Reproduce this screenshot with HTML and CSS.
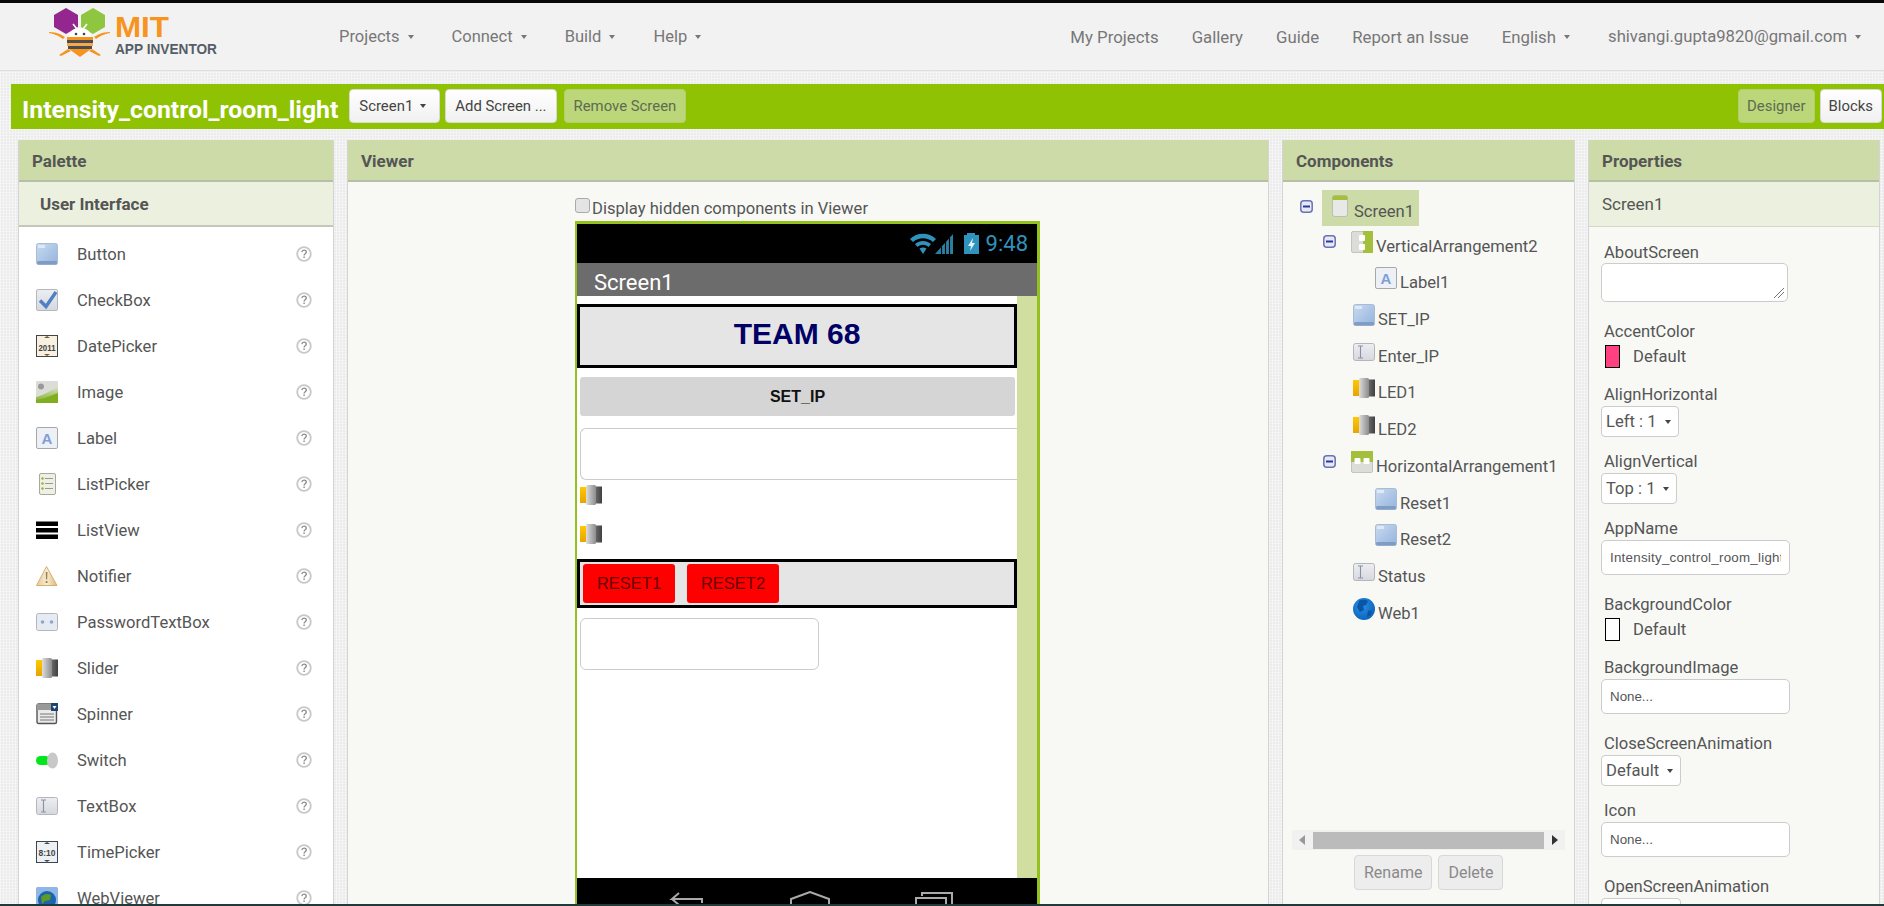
FILE: index.html
```html
<!DOCTYPE html>
<html lang="en">
<head>
<meta charset="utf-8">
<title>MIT App Inventor</title>
<link rel="stylesheet" href="styles.css">
</head>
<body>
<svg class="defs" aria-hidden="true">
  <defs>
    <linearGradient id="g-btn" x1="0" y1="0" x2="1" y2="1"><stop offset="0" stop-color="#c9daf0"/><stop offset="1" stop-color="#94b3dc"/></linearGradient>
    <linearGradient id="g-box" x1="0" y1="0" x2="0" y2="1"><stop offset="0" stop-color="#eceef2"/><stop offset="1" stop-color="#d6d8de"/></linearGradient>
    <linearGradient id="g-hill" x1="0" y1="0" x2="0" y2="1"><stop offset="0" stop-color="#d8e2c8"/><stop offset="1" stop-color="#7cab1c"/></linearGradient>
    <linearGradient id="g-warn" x1="0" y1="0" x2="1" y2="0"><stop offset="0" stop-color="#e9c98c"/><stop offset=".5" stop-color="#f6ecd6"/><stop offset="1" stop-color="#dfb871"/></linearGradient>
    <linearGradient id="g-sld-y" x1="0" y1="0" x2="0" y2="1"><stop offset="0" stop-color="#ffc800"/><stop offset="1" stop-color="#e8a400"/></linearGradient>
    <linearGradient id="g-sld-t" x1="0" y1="0" x2="1" y2="0"><stop offset="0" stop-color="#dedede"/><stop offset=".5" stop-color="#b4b4b4"/><stop offset="1" stop-color="#8c8c8c"/></linearGradient>
    <linearGradient id="g-sld-d" x1="0" y1="0" x2="1" y2="0"><stop offset="0" stop-color="#7a7a7a"/><stop offset="1" stop-color="#404040"/></linearGradient>
    <radialGradient id="g-web" cx=".4" cy=".35" r=".7"><stop offset="0" stop-color="#2a90e8"/><stop offset="1" stop-color="#0a62b8"/></radialGradient>

    <symbol id="i-button" viewBox="0 0 22 22"><rect x=".5" y=".5" width="21" height="21" rx="2" fill="url(#g-btn)" stroke="#a9bcd6"/><rect x="1" y="18" width="20" height="3.5" rx="1.5" fill="#7f9cc4"/><rect x="2" y="2" width="7" height="3" fill="#dfe9f6"/></symbol>
    <symbol id="i-check" viewBox="0 0 22 22"><rect x=".5" y=".5" width="21" height="21" rx="1.5" fill="url(#g-box)" stroke="#b5b8be"/><path d="M4 11.5l6 6L20 3" fill="none" stroke="#4f80c4" stroke-width="3.4"/></symbol>
    <symbol id="i-date" viewBox="0 0 22 22"><rect x=".5" y=".5" width="21" height="21" fill="#f8f0e0" stroke="#444"/><path d="M8 3h6l-3-2zM8 19h6l-3 2z" fill="#6a5a3a"/><text x="2.500" y="15.500" class="ic-date" textLength="17" lengthAdjust="spacingAndGlyphs">2011</text></symbol>
    <symbol id="i-image" viewBox="0 0 22 22"><rect width="22" height="22" rx="1" fill="#dcdcd8"/><path d="M0 16c6-1 13-6 22-10v16H0z" fill="url(#g-hill)"/><path d="M0 19c8-1 14-4 22-7v10H0z" fill="#7faf1e"/><circle cx="5" cy="5.500" r="3" fill="#999"/></symbol>
    <symbol id="i-label" viewBox="0 0 22 22"><rect x=".5" y=".5" width="21" height="21" rx="1.500" fill="#edf0f5" stroke="#a8a8ac"/><text x="11" y="16.500" class="ic-a">A</text></symbol>
    <symbol id="i-list" viewBox="0 0 22 22"><rect x="3.500" y=".5" width="16" height="21" rx="1.500" fill="#eef0e4" stroke="#a8a8a0"/><g fill="#8fb13a"><circle cx="6.500" cy="5.500" r="1.200"/><circle cx="6.500" cy="10.500" r="1.200"/><circle cx="6.500" cy="15.500" r="1.200"/></g><path d="M9 5.500h8M9 10.500h8M9 15.500h8" stroke="#9a9a94" stroke-width="1.200"/></symbol>
    <symbol id="i-listview" viewBox="0 0 22 22"><path d="M0 2.500h22v4.500H0zM0 9h22v4.500H0zM0 15.500h22V20H0z" fill="#000"/></symbol>
    <symbol id="i-notifier" viewBox="0 0 22 22"><path d="M10.500 1.500L21 20.500H.5z" fill="url(#g-warn)" stroke="#d6b070"/><path d="M9.700 7h1.800l-.3 7.500h-1.200zM9.700 16h1.800v2h-1.800z" fill="#9a8355"/></symbol>
    <symbol id="i-password" viewBox="0 0 22 22"><rect x=".5" y="2.500" width="21" height="17" rx="2" fill="#e6eaf2" stroke="#b4b6bc"/><circle cx="6.500" cy="11" r="1.800" fill="#8fa6c8"/><circle cx="15.500" cy="11" r="1.800" fill="#8fa6c8"/></symbol>
    <symbol id="i-slider" viewBox="0 0 22 22"><rect y="3" width="8" height="16" fill="url(#g-sld-y)"/><rect x="13" y="2.500" width="9" height="17" fill="url(#g-sld-d)"/><rect x="6" y="1" width="10" height="20" rx="1.500" fill="url(#g-sld-t)"/></symbol>
    <symbol id="i-spinner" viewBox="0 0 22 22"><rect x="1" y="1" width="19.500" height="19.500" rx="1.500" fill="#e9e9e9" stroke="#555" stroke-width="1.400"/><rect x="1" y="1" width="14" height="6" fill="#999"/><rect x="15" y="0" width="7" height="8" fill="#1f4470"/><path d="M16.500 3h4l-2 3z" fill="#fff"/><path d="M4 11h14M4 14h14M4 17h14" stroke="#777"/></symbol>
    <symbol id="i-switch" viewBox="0 0 22 22"><rect y="7" width="14" height="9" rx="4.500" fill="#00e81c"/><ellipse cx="16.500" cy="11.500" rx="5.500" ry="8" fill="#c8c8c8"/></symbol>
    <symbol id="i-textbox" viewBox="0 0 22 22"><rect x=".5" y="2.500" width="21" height="17" rx="2" fill="url(#g-box)" stroke="#b4b6bc"/><path d="M5 5h5M5 17h5M7.500 5v12" stroke="#8a8fa8" stroke-width="1.100" fill="none"/></symbol>
    <symbol id="i-time" viewBox="0 0 22 22"><rect x=".5" y=".5" width="21" height="21" fill="#eef1f4" stroke="#3a4654"/><path d="M8 3h6l-3-2zM8 19h6l-3 2z" fill="#3a4654"/><text x="2.500" y="15" class="ic-date" textLength="17" lengthAdjust="spacingAndGlyphs">8:10</text></symbol>
    <symbol id="i-web" viewBox="0 0 22 22"><circle cx="11" cy="11" r="11" fill="url(#g-web)"/><path d="M6 3c3-2 7-1 9 0l-2 4-3 1 1 4-4 2-3-5zM15 13l4-1-1 5-4 2z" fill="#0a55a5"/></symbol>
    <symbol id="i-webp" viewBox="0 0 22 22"><rect width="22" height="22" rx="1.500" fill="#8fb6e4"/><circle cx="11" cy="13" r="9" fill="#1c64b0"/><path d="M5 10c3-3 7-4 10-2l-1 5-5 1-3 3z" fill="#5f9a22"/></symbol>
    <symbol id="i-screen" viewBox="0 0 16 22"><rect x=".5" y=".5" width="15" height="21" rx="2" fill="#e8e8e6" stroke="#bdbdb5"/><path d="M.5 5V2.500a2 2 0 0 1 2-2h11a2 2 0 0 1 2 2V5z" fill="#a3bf3c"/></symbol>
    <symbol id="i-varr" viewBox="0 0 22 22"><rect x=".5" y=".5" width="21" height="21" rx="1.500" fill="#dcdcd8" stroke="#c4c4be"/><rect x="12" y="0" width="10" height="22" fill="#a3bf3c"/><rect x="8" y="4" width="6" height="6" rx="1" fill="#fff"/><rect x="8" y="13" width="6" height="6" rx="1" fill="#fff"/></symbol>
    <symbol id="i-harr" viewBox="0 0 22 22"><rect x=".5" y=".5" width="21" height="21" rx="1.500" fill="#dcdcd8" stroke="#c4c4be"/><rect width="22" height="11" fill="#a3bf3c"/><rect x="3.500" y="7" width="6" height="6" rx="1" fill="#fff"/><rect x="12.500" y="7" width="6" height="6" rx="1" fill="#fff"/></symbol>
    <symbol id="i-minus" viewBox="0 0 13 13"><rect x=".8" y=".8" width="11.400" height="11.400" rx="3" fill="#e6e8f4" stroke="#6a72b4" stroke-width="1.500"/><rect x="3" y="5.500" width="7" height="2" fill="#2a3a9a"/></symbol>
    <symbol id="i-help" viewBox="0 0 16 16"><circle cx="8" cy="8" r="6.800" fill="#fff" stroke="#c8c8c8" stroke-width="1.800"/><path d="M5.800 6.200c.2-1.400 1.200-2 2.300-2 1.300 0 2.200.8 2.200 1.900 0 1.800-2.200 1.600-2.200 3.400" fill="none" stroke="#8a8a8a" stroke-width="1.300"/><rect x="7.400" y="10.500" width="1.400" height="1.500" fill="#8a8a8a"/></symbol>
  </defs>
</svg>

<div class="app">
  <header class="nav">
    <a class="logo">
      <svg class="logo-svg" viewBox="0 0 180 56" width="180" height="56">
        <path d="M9 10L21 3l12 7v12l-12 7-12-7z" fill="#93268f"/>
        <path d="M36 10l12-7 12 7v12l-12 7-12-7z" fill="#8fc640"/>
        <path d="M4 27c8 0 13 3 16 5l-2 2c-4-3-8-5-14-6zM65 27c-8 0-13 3-16 5l2 2c4-3 8-5 14-6z" fill="#f7941e"/>
        <path d="M28 19l4 5M42 19l-4 5" stroke="#fff" stroke-width="1.600"/>
        <path d="M24 32c0-6 5-9 11-9s11 3 11 9z" fill="#fff"/>
        <circle cx="31" cy="29" r="1.300" fill="#444"/><circle cx="39" cy="29" r="1.300" fill="#444"/>
        <path d="M22 32h26v3H22z" fill="#f7941e"/>
        <path d="M22 35h26v3H22z" fill="#4d4d4d"/>
        <path d="M22 38h26v3H22z" fill="#f7a84a"/>
        <path d="M23 41h24v3H23z" fill="#4d4d4d"/>
        <path d="M24 44h22l-11 8z" fill="#f7941e"/>
        <path d="M23 44l-9 6 2 1 10-5zM47 44l9 6-2 1-10-5z" fill="#f7941e"/>
        <text x="70" y="32" class="logo-mit" textLength="54" lengthAdjust="spacingAndGlyphs">MIT</text>
        <text x="70" y="49" class="logo-app" textLength="102" lengthAdjust="spacingAndGlyphs">APP INVENTOR</text>
      </svg>
    </a>
    <nav class="nav-left">
      <span class="nav-item">Projects<i class="caret"></i></span>
      <span class="nav-item">Connect<i class="caret"></i></span>
      <span class="nav-item">Build<i class="caret"></i></span>
      <span class="nav-item">Help<i class="caret"></i></span>
    </nav>
    <nav class="nav-right">
      <span class="nav-link">My Projects</span>
      <span class="nav-link">Gallery</span>
      <span class="nav-link">Guide</span>
      <span class="nav-link">Report an Issue</span>
      <span class="nav-item">English<i class="caret"></i></span>
      <span class="nav-item nav-email">shivangi.gupta9820@gmail.com<i class="caret"></i></span>
    </nav>
  </header>

  <section class="bar">
    <h1 class="bar-title">Intensity_control_room_light</h1>
    <button class="bar-btn bar-btn-menu">Screen1<i class="caret caret-dark"></i></button>
    <button class="bar-btn">Add Screen ...</button>
    <button class="bar-btn bar-btn-off bar-btn-far">Remove Screen</button>
    <span class="bar-spacer"></span>
    <button class="bar-btn bar-btn-off bar-btn-compact">Designer</button>
    <button class="bar-btn bar-btn-compact">Blocks</button>
  </section>

  <main class="panels">
    <section class="panel palette">
      <h2 class="panel-head">Palette</h2>
      <h3 class="panel-sub panel-sub-bold">User Interface</h3>
      <ul class="pal-list">
        <li class="pal-row"><svg class="ic"><use href="#i-button"/></svg><span class="pal-name">Button</span><svg class="help"><use href="#i-help"/></svg></li>
        <li class="pal-row"><svg class="ic"><use href="#i-check"/></svg><span class="pal-name">CheckBox</span><svg class="help"><use href="#i-help"/></svg></li>
        <li class="pal-row"><svg class="ic"><use href="#i-date"/></svg><span class="pal-name">DatePicker</span><svg class="help"><use href="#i-help"/></svg></li>
        <li class="pal-row"><svg class="ic"><use href="#i-image"/></svg><span class="pal-name">Image</span><svg class="help"><use href="#i-help"/></svg></li>
        <li class="pal-row"><svg class="ic"><use href="#i-label"/></svg><span class="pal-name">Label</span><svg class="help"><use href="#i-help"/></svg></li>
        <li class="pal-row"><svg class="ic"><use href="#i-list"/></svg><span class="pal-name">ListPicker</span><svg class="help"><use href="#i-help"/></svg></li>
        <li class="pal-row"><svg class="ic"><use href="#i-listview"/></svg><span class="pal-name">ListView</span><svg class="help"><use href="#i-help"/></svg></li>
        <li class="pal-row"><svg class="ic"><use href="#i-notifier"/></svg><span class="pal-name">Notifier</span><svg class="help"><use href="#i-help"/></svg></li>
        <li class="pal-row"><svg class="ic"><use href="#i-password"/></svg><span class="pal-name">PasswordTextBox</span><svg class="help"><use href="#i-help"/></svg></li>
        <li class="pal-row"><svg class="ic"><use href="#i-slider"/></svg><span class="pal-name">Slider</span><svg class="help"><use href="#i-help"/></svg></li>
        <li class="pal-row"><svg class="ic"><use href="#i-spinner"/></svg><span class="pal-name">Spinner</span><svg class="help"><use href="#i-help"/></svg></li>
        <li class="pal-row"><svg class="ic"><use href="#i-switch"/></svg><span class="pal-name">Switch</span><svg class="help"><use href="#i-help"/></svg></li>
        <li class="pal-row"><svg class="ic"><use href="#i-textbox"/></svg><span class="pal-name">TextBox</span><svg class="help"><use href="#i-help"/></svg></li>
        <li class="pal-row"><svg class="ic"><use href="#i-time"/></svg><span class="pal-name">TimePicker</span><svg class="help"><use href="#i-help"/></svg></li>
        <li class="pal-row"><svg class="ic"><use href="#i-webp"/></svg><span class="pal-name">WebViewer</span><svg class="help"><use href="#i-help"/></svg></li>
      </ul>
    </section>

    <section class="panel viewer">
      <h2 class="panel-head">Viewer</h2>
      <div class="viewer-body">
        <label class="hidden-toggle"><i class="fake-check"></i>Display hidden components in Viewer</label>
        <div class="phone">
          <div class="phone-status">
            <svg class="status-icons" viewBox="0 0 72 24" width="72" height="24">
              <path d="M2 7C9 0 21 0 28 7l-3 3C19 5 11 5 5 10zM7 12c5-4 11-4 16 0l-2.500 3c-3.500-3-7.500-3-11 0zM11.500 16.500c2.500-1.500 4.500-1.500 7 0L15 22z" fill="#2f93bd"/>
              <path d="M27 22L45 2v20z" fill="#2a7fa3"/><path d="M33.500 22v-7M37.500 22V10M41.500 22V6" stroke="#000" stroke-width="1.100"/>
              <path d="M59 3V1h8v2h4v19H56V3z" fill="#2f93bd"/><path d="M65 6l-5 8h3l-1 5 5-8h-3z" fill="#dff4ff"/>
            </svg>
            <span class="status-time">9:48</span>
          </div>
          <div class="phone-title">Screen1</div>
          <div class="phone-main">
            <div class="phone-content">
              <div class="arr-label"><span class="team">TEAM 68</span></div>
              <button class="set-ip">SET_IP</button>
              <div class="tbox tbox-full"></div>
              <svg class="ic ic-led-first"><use href="#i-slider"/></svg>
              <svg class="ic ic-led-next"><use href="#i-slider"/></svg>
              <div class="arr-reset">
                <button class="reset">RESET1</button>
                <button class="reset">RESET2</button>
              </div>
              <div class="tbox tbox-status"></div>
            </div>
            <div class="phone-scroll"></div>
          </div>
          <div class="phone-nav">
            <svg class="nav-glyph" viewBox="0 0 36 14" width="36" height="14"><path d="M10 2L3 8h30v4M3 8l7 6" fill="none" stroke="#aaa" stroke-width="2"/></svg>
            <svg class="nav-glyph" viewBox="0 0 42 16" width="42" height="16"><path d="M2 16V8L21 1l19 7v8" fill="none" stroke="#aaa" stroke-width="2"/></svg>
            <svg class="nav-glyph" viewBox="0 0 38 14" width="38" height="14"><path d="M1 14V7h30v7M7 5V2h30v12" fill="none" stroke="#aaa" stroke-width="2"/></svg>
          </div>
        </div>
      </div>
    </section>

    <section class="panel components">
      <h2 class="panel-head">Components</h2>
      <div class="comp-body">
        <div class="tree">
          <div class="tree-row tree-root"><svg class="toggle"><use href="#i-minus"/></svg><span class="tree-sel"><svg class="ic ic-screen"><use href="#i-screen"/></svg><span class="tree-name">Screen1</span></span></div>
          <div class="tree-row tree-branch"><svg class="toggle"><use href="#i-minus"/></svg><svg class="ic"><use href="#i-varr"/></svg><span class="tree-name">VerticalArrangement2</span></div>
          <div class="tree-row tree-sub"><svg class="ic"><use href="#i-label"/></svg><span class="tree-name">Label1</span></div>
          <div class="tree-row tree-leaf"><svg class="ic"><use href="#i-button"/></svg><span class="tree-name">SET_IP</span></div>
          <div class="tree-row tree-leaf"><svg class="ic"><use href="#i-textbox"/></svg><span class="tree-name">Enter_IP</span></div>
          <div class="tree-row tree-leaf"><svg class="ic"><use href="#i-slider"/></svg><span class="tree-name">LED1</span></div>
          <div class="tree-row tree-leaf"><svg class="ic"><use href="#i-slider"/></svg><span class="tree-name">LED2</span></div>
          <div class="tree-row tree-branch"><svg class="toggle"><use href="#i-minus"/></svg><svg class="ic"><use href="#i-harr"/></svg><span class="tree-name">HorizontalArrangement1</span></div>
          <div class="tree-row tree-sub"><svg class="ic"><use href="#i-button"/></svg><span class="tree-name">Reset1</span></div>
          <div class="tree-row tree-sub"><svg class="ic"><use href="#i-button"/></svg><span class="tree-name">Reset2</span></div>
          <div class="tree-row tree-leaf"><svg class="ic"><use href="#i-textbox"/></svg><span class="tree-name">Status</span></div>
          <div class="tree-row tree-leaf"><svg class="ic"><use href="#i-web"/></svg><span class="tree-name">Web1</span></div>
        </div>
        <div class="hscroll"><i class="arrow-left"></i><span class="hthumb"></span><i class="arrow-right"></i></div>
        <div class="comp-actions">
          <button class="comp-btn">Rename</button>
          <button class="comp-btn">Delete</button>
        </div>
      </div>
    </section>

    <section class="panel properties">
      <h2 class="panel-head">Properties</h2>
      <h3 class="panel-sub panel-sub-line">Screen1</h3>
      <div class="prop-body">
        <div class="prop prop-area-wrap"><div class="prop-label">AboutScreen</div><div class="prop-area"><svg class="grip" viewBox="0 0 12 12" width="12" height="12"><path d="M1 11L11 1M5 11l6-6" stroke="#777"/></svg></div></div>
        <div class="prop prop-color-wrap"><div class="prop-label">AccentColor</div><div class="prop-color"><i class="swatch swatch-accent"></i>Default</div></div>
        <div class="prop prop-select-wrap"><div class="prop-label">AlignHorizontal</div><div class="prop-select">Left : 1<i class="caret caret-dark"></i></div></div>
        <div class="prop prop-select-wrap"><div class="prop-label">AlignVertical</div><div class="prop-select">Top : 1<i class="caret caret-dark"></i></div></div>
        <div class="prop prop-input-wrap"><div class="prop-label">AppName</div><div class="prop-input"><span class="prop-clip">Intensity_control_room_light</span></div></div>
        <div class="prop prop-color-wrap"><div class="prop-label">BackgroundColor</div><div class="prop-color"><i class="swatch"></i>Default</div></div>
        <div class="prop prop-input-wrap"><div class="prop-label">BackgroundImage</div><div class="prop-input">None...</div></div>
        <div class="prop prop-select-wrap"><div class="prop-label">CloseScreenAnimation</div><div class="prop-select">Default<i class="caret caret-dark"></i></div></div>
        <div class="prop prop-input-wrap"><div class="prop-label">Icon</div><div class="prop-input">None...</div></div>
        <div class="prop prop-select-wrap"><div class="prop-label">OpenScreenAnimation</div><div class="prop-select">Default<i class="caret caret-dark"></i></div></div>
      </div>
    </section>
  </main>
</div>
<div class="taskbar"></div>
</body>
</html>
```

FILE: styles.css
```css
* { box-sizing: border-box; }
html, body { margin: 0; padding: 0; height: 906px; overflow: hidden; }
body {
  font-family: Roboto, "Liberation Sans", sans-serif;
  color: #555;
  background-color: #ececec;
  background-image:
    linear-gradient(90deg, rgba(255,255,255,.35) 1px, transparent 1px),
    linear-gradient(rgba(255,255,255,.35) 1px, transparent 1px);
  background-size: 3px 3px;
  display: flex;
  flex-direction: column;
}
i { display: block; }
button { font-family: inherit; margin: 0; }
h1, h2, h3, ul { margin: 0; padding: 0; }
li { list-style: none; }
.defs { position: absolute; width: 0; height: 0; }
.ic-date { font: 700 9px "Liberation Sans", sans-serif; fill: #444; }
.ic-a { font: 700 15px "Liberation Sans", sans-serif; text-anchor: middle; fill: #7f9fd8; }

.app { flex: none; height: 904px; overflow: hidden; border-top: 3px solid #0a0a0a; display: flex; flex-direction: column; }
.taskbar { flex: none; height: 2px; background: #1f3a3a; }

/* top navigation */
.nav { flex: none; height: 68px; background: #f2f2f2; border-bottom: 1px solid #dedede; display: flex; align-items: center; padding-right: 23px; font-size: 16.500px; color: #777; }
.logo { flex: none; width: 339px; padding: 2px 0 0 45px; height: 68px; }
.logo-svg { display: block; }
.logo-mit { font: 700 29px "Liberation Sans", sans-serif; fill: #f7941e; }
.logo-app { font: 700 14.500px "Liberation Sans", sans-serif; fill: #555d66; }
.nav-left { display: flex; gap: 38px; }
.nav-right { margin-left: auto; display: flex; gap: 33px; align-items: center; font-size: 16.800px; }
.nav-item { display: flex; align-items: center; gap: 8px; }
.nav-link { padding-top: 1px; }
.nav-email { margin-left: 5px; font-size: 16.660px; }
.caret { width: 0; height: 0; border-left: 3px solid transparent; border-right: 3px solid transparent; border-top: 4px solid #777; }
.caret-dark { border-top-color: #444; }

/* green toolbar */
.bar { flex: none; height: 45px; margin: 13px 0 0 11px; background: #8fc202; display: flex; align-items: flex-start; padding: 5px 2px 0 11px; gap: 5px; }
.bar-title { font-size: 24.800px; font-weight: 700; color: #fff; line-height: 42px; margin-right: 6px; white-space: nowrap; }
.bar-btn { height: 34px; padding: 0 9px; border: 1px solid #d8d8d8; border-radius: 4px; background: linear-gradient(#fff, #f0f0f0); font-size: 14.900px; color: #444; display: flex; align-items: center; gap: 7px; white-space: nowrap; }
.bar-btn-off { background: #bcd77a; border-color: #b2cf6e; color: #5e6a52; }
.bar-btn-menu { padding-right: 13px; }
.bar-btn-far { margin-left: 2px; }
.bar-btn-compact { padding: 0 8px; }
.bar-spacer { flex: 1; }

/* panels */
.panels { flex: 1; min-height: 0; margin-top: 11px; padding-left: 18px; display: flex; align-items: stretch; }
.panel { display: flex; flex-direction: column; background: #f8f9f5; border-left: 1px solid #d4d4d4; border-right: 1px solid #d4d4d4; overflow: hidden; }
.palette { width: 316px; }
.viewer { width: 922px; margin-left: 13px; }
.components { width: 293px; margin-left: 13px; }
.properties { width: 292px; margin-left: 13px; }
.panel-head { flex: none; height: 42px; background: #ccdba7; border-bottom: 2px solid #b8bfa8; padding: 0 13px; font-size: 17px; font-weight: 700; line-height: 43px; color: #555; }
.panel-sub { flex: none; height: 44px; background: #ecf1df; font-size: 17px; font-weight: 400; line-height: 44px; padding: 0 13px; color: #555; }
.panel-sub-bold { font-weight: 700; padding-left: 21px; border-bottom: 2px solid #c4c8b8; height: 45px; line-height: 45px; }
.panel-sub-line { border-bottom: 1px solid #d4d8c8; height: 45px; }

/* palette */
.pal-list { flex: 1; background: #fff; padding-top: 4px; overflow: hidden; }
.pal-row { height: 46px; display: flex; align-items: center; padding-left: 17px; font-size: 16.600px; color: #555; }
.ic { flex: none; width: 22px; height: 22px; display: block; }
.pal-name { margin-left: 19px; flex: 1; }
.help { flex: none; width: 16px; height: 16px; margin-right: 21px; }

/* viewer */
.viewer-body { flex: 1; padding-left: 227px; min-height: 0; }
.hidden-toggle { height: 39px; padding-top: 17px; display: flex; font-size: 16.600px; line-height: 20px; color: #555; }
.fake-check { width: 15px; height: 15px; margin: -1px 2px 0 0; background: #e4e4e4; border: 1px solid #aaa; border-radius: 3px; }
.phone { width: 465px; height: 700px; border: solid #95c11f; border-width: 3px 3px 0 2px; display: flex; flex-direction: column; }
.phone-status { flex: none; height: 39px; background: #000; display: flex; align-items: center; justify-content: flex-end; padding-right: 9px; gap: 6px; }
.status-time { font-size: 22px; color: #2f93bd; }
.phone-title { flex: none; height: 33px; background: #6c6c6c; color: #fff; font-size: 22px; line-height: 40px; padding-left: 17px; overflow: hidden; }
.phone-main { flex: none; height: 582px; display: flex; background: #fff; }
.phone-content { width: 440px; display: flex; flex-direction: column; align-items: flex-start; }
.phone-scroll { width: 20px; background: #d0dfa0; }
.arr-label { flex: none; width: 440px; height: 64px; margin-top: 8px; padding-bottom: 4px; border: 3px solid #000; background: #e5e5e5; display: flex; align-items: center; justify-content: center; }
.team { font: 700 30px "Liberation Sans", sans-serif; color: #000066; }
.set-ip { flex: none; width: 435px; height: 39px; margin: 9px 0 0 3px; border: 0; border-radius: 3px; background: #d5d5d5; font: 700 16px "Liberation Sans", sans-serif; color: #111; }
.tbox { flex: none; height: 52px; background: #fff; border: 1px solid #ccc; border-radius: 6px; margin-left: 3px; }
.tbox-full { width: 437px; margin-top: 12px; border-right: 0; border-top-right-radius: 0; border-bottom-right-radius: 0; }
.tbox-status { width: 239px; margin-top: 10px; }
.ic-led-first { margin: 4px 0 0 3px; }
.ic-led-next { margin: 17px 0 0 3px; }
.arr-reset { flex: none; width: 440px; height: 49px; margin-top: 14px; border: 3px solid #000; background: #e5e5e5; padding: 2px 3px; display: flex; gap: 12px; }
.reset { width: 92px; height: 39px; border: 0; border-radius: 3px; background: #f00; font: 400 16.500px "Liberation Sans", sans-serif; color: #600; padding: 0; }
.phone-nav { flex: none; height: 28px; background: #000; display: flex; align-items: flex-start; padding: 13px 0 0 92px; gap: 84px; }
.nav-glyph { flex: none; }

/* components */
.comp-body { flex: 1; min-height: 0; display: flex; flex-direction: column; }
.tree { flex: 1; min-height: 0; padding-top: 8px; font-size: 16.600px; color: #555; overflow: hidden; }
.tree-row { height: 36.700px; display: flex; align-items: flex-start; white-space: nowrap; }
.tree-row > .ic { margin-top: 4px; }
.tree-name { display: block; margin: 10px 0 0 3px; line-height: 20px; }
.toggle { flex: none; width: 13px; height: 13px; margin-top: 8px; }
.tree-root { padding-left: 17px; }
.tree-root .toggle { margin: 10px 9px 0 0; }
.tree-root .tree-name { margin-top: 11px; }
.tree-branch { padding-left: 40px; }
.tree-branch .toggle { margin-right: 15px; }
.tree-leaf { padding-left: 70px; }
.tree-sub { padding-left: 92px; }
.tree-sel { height: 36px; display: flex; align-items: flex-start; background: #ccdba7; padding: 1px 5px 0 10px; }
.ic-screen { width: 16px; margin: 4px 3px 0 0; }
.hscroll { flex: none; height: 20px; margin: 0 9px 0 9px; background: #f1f1f1; display: flex; align-items: center; justify-content: space-between; }
.hthumb { width: 231px; height: 17px; background: #bbb; }
.arrow-left { margin-left: 7px; border: 5px solid transparent; border-left: 0; border-right: 6px solid #999; }
.arrow-right { margin-right: 7px; border: 5px solid transparent; border-right: 0; border-left: 6px solid #333; }
.comp-actions { flex: none; height: 35px; margin: 5px 0 14px; padding-left: 71px; display: flex; gap: 6px; }
.comp-btn { height: 35px; padding: 0 9px; background: #ededed; border: 1px solid #d8d8d8; border-radius: 4px; font-size: 16px; color: #8a8a8a; }

/* properties */
.prop-body { flex: 1; min-height: 0; padding: 16px 0 0 12px; overflow: hidden; }
.prop-label { height: 20px; line-height: 20px; margin: 0 0 1px 3px; font-size: 16.600px; color: #555; }
.prop-area-wrap { margin-bottom: 20px; }
.prop-color-wrap { margin-bottom: 17px; }
.prop-select-wrap { margin-bottom: 15px; }
.prop-input-wrap { margin-bottom: 20px; }
.prop-area { position: relative; width: 187px; height: 39px; margin-top: -1px; background: #fff; border: 1px solid #ccc; border-radius: 5px; }
.grip { position: absolute; right: 2px; bottom: 2px; }
.prop-color { height: 23px; margin-top: 3px; padding-left: 4px; display: flex; align-items: center; gap: 13px; font-size: 16.600px; color: #555; }
.swatch { width: 15px; height: 23px; border: 1px solid #000; background: #fff; }
.swatch-accent { background: #ff4081; }
.prop-select { display: flex; width: fit-content; align-items: center; gap: 8px; height: 31px; padding: 0 7px 0 4px; background: #fff; border: 1px solid #ccc; border-radius: 4px; font-size: 16.600px; color: #555; }
.prop-input { width: 189px; height: 35px; padding: 0 8px; background: #fff; border: 1px solid #ccc; border-radius: 5px; font: 400 13.330px/33px "Liberation Sans", sans-serif; color: #555; white-space: nowrap; overflow: hidden; }
.prop-clip { display: block; overflow: hidden; letter-spacing: .25px; }
```
